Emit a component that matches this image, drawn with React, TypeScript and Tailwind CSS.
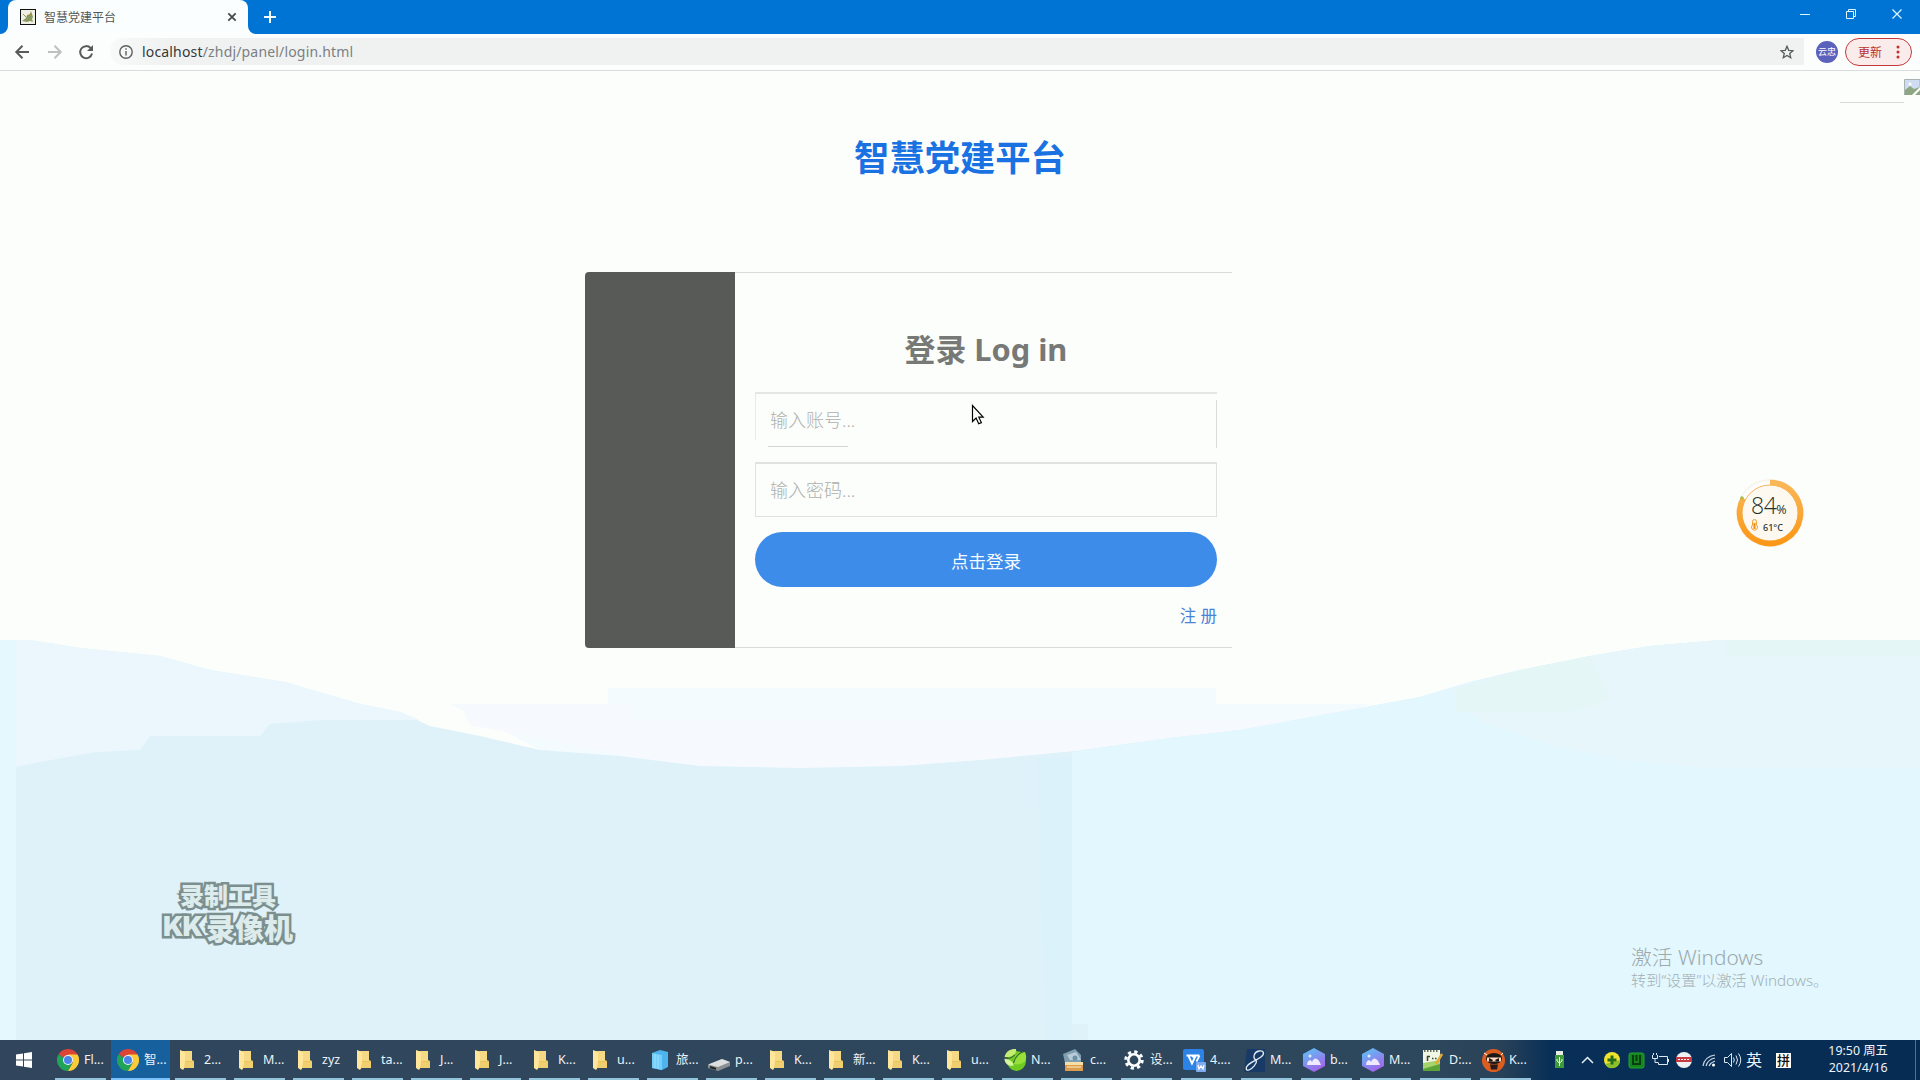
import React from "react";

function Tab() {
  return (
    <header className="flex h-[34px] items-start bg-[#0074d4]">
      <div className="relative ml-2 flex h-[34px] w-[240px] items-center rounded-t-lg bg-[#fbfefe] pl-3">
        <svg className="absolute -left-2 bottom-0" width="8" height="8"><path d="M8 0v8H0a8 8 0 0 0 8-8z" fill="#fbfefe" /></svg>
        <svg className="absolute -right-2 bottom-0" width="8" height="8"><path d="M0 0v8h8a8 8 0 0 1-8-8z" fill="#fbfefe" /></svg>
        <svg width="16" height="16" viewBox="0 0 16 16">
          <rect x=".5" y=".5" width="15" height="15" fill="#eef0e4" stroke="#111" />
          <path d="M2 12l4-3 1-3 3-1 1-3 1 3 1 3-1 2 1 3-3-1-3 1z" fill="#8b9a63" />
          <path d="M3 5l3 3M11 4l-1 3" stroke="#a58b45" fill="none" />
        </svg>
        <span className="ml-2 w-[181px] pt-px text-[12px] leading-4 text-[#50585a]">智慧党建平台</span>
        <svg width="14" height="14" viewBox="0 0 14 14"><path d="M3.3 3.3l7.4 7.4M10.7 3.3L3.3 10.7" stroke="#444a4a" strokeWidth="1.8" /></svg>
      </div>
      <svg className="ml-[15px] mt-[10px]" width="14" height="14"><path d="M7 1v12M1 7h12" stroke="#f4fdff" strokeWidth="2" /></svg>
      <svg className="ml-auto mr-[18px] mt-[7px]" width="108" height="14" fill="none" stroke="#dcf7ff">
        <path d="M6 7.5h10" />
        <path d="M52.5 4.5h7v7h-7zM54.500 4.500v-2h7v7h-2" />
        <path d="M98.500 2.500l9 9M107.500 2.500l-9 9" strokeWidth="1.2" />
      </svg>
    </header>
  );
}

function Toolbar() {
  return (
    <div className="flex h-[37px] items-center border-b border-[#d9dcdc] bg-[#fbfefd] pb-px">
      <svg className="ml-[14px]" width="84" height="18" viewBox="0 0 84 18" fill="none" strokeWidth="2">
        <path d="M15 9H2.500M8.500 2.800L2.300 9l6.200 6.200" stroke="#575b5b" />
        <path d="M34 9h12.500M40.500 2.800L46.700 9l-6.200 6.200" stroke="#bcc0c0" />
        <path d="M76.700 5.200A6 6 0 1 0 78 10.500" stroke="#575b5b" />
        <path d="M79 2v6h-6z" fill="#575b5b" />
      </svg>
      <div className="ml-[12px] flex h-[27px] w-[1694px] items-center rounded-l-[13px] bg-[linear-gradient(90deg,#f8fafa_0,#f0f2f2_60px)] pl-[9px]">
        <svg width="14" height="14" viewBox="0 0 14 14" fill="none" stroke="#5c6060" strokeWidth="1.400"><circle cx="7" cy="7" r="6.200" /><path d="M7 6v4.500M7 3.200v1.600" /></svg>
        <span className="ml-[9px] text-[14px] leading-5 text-[#7a8082] [letter-spacing:0.17px]"><span className="text-[#34393a]">localhost</span>/zhdj/panel/login.html</span>
        <svg className="ml-auto mr-[10px]" width="14" height="14" viewBox="0 0 14 14"><path d="M7 1.300l1.700 4 4.300.4-3.300 2.800 1 4.200L7 10.500l-3.700 2.200 1-4.200L1 5.700l4.300-.4z" fill="none" stroke="#555b5b" strokeWidth="1.300" /></svg>
      </div>
      <div className="ml-[12px] flex h-[22px] w-[22px] items-center justify-center whitespace-nowrap rounded-full bg-[#5b62bb] text-[9px] text-white">云忠</div>
      <div className="ml-[7px] flex h-7 w-[67px] items-center rounded-full border border-[#c4383a] bg-[#fbecec] pl-3 text-[12px] text-[#b9312f]">
        <span className="pt-[2px]">更新</span>
        <svg className="ml-[14px]" width="4" height="14" fill="#c0302f"><circle cx="2" cy="2" r="1.500" /><circle cx="2" cy="7" r="1.500" /><circle cx="2" cy="12" r="1.500" /></svg>
      </div>
    </div>
  );
}

function Waves() {
  return (
    <svg className="absolute inset-0" width="1920" height="969" viewBox="0 71 1920 969">
      <rect y="71" width="1920" height="969" fill="#fcfefb" />
      <path d="M608 688H1216V704H1370L1200 760H560L450 704H608z" fill="#f4fbfe" />
      <path d="M460 704H630V720H1330L1150 770H700L470 725z" fill="#f6faff" />
      <path d="M0 640H30L80 648L160 656L210 670L285 682L360 704L400 712L430 726L480 736L540 750L620 756L700 766L800 768L900 766L980 760L1075 751L1170 738L1240 730L1300 719L1360 708L1420 697L1470 682L1520 670L1590 656L1650 646L1720 640H1920V1040H0z" fill="#dff2fa" />
      <path d="M1072 752L1170 738L1240 730L1300 719L1360 708L1420 697L1470 682L1520 670L1590 656L1650 646L1720 640H1920V1040H1088V1024H1072z" fill="#e3f7fe" />
      <path d="M1450 690L1520 670L1590 656L1650 646L1720 640H1920V768H1700L1620 760L1550 745L1480 722z" fill="#e6f6fb" />
      <path d="M1455 688L1520 670L1590 656L1610 700L1570 712H1455zM1725 640H1920V656H1725z" fill="#e5f6f7" />
      <path d="M0 640H30L80 648L160 656L210 670L285 682L360 704L400 712L420 720H320L270 724L260 736H150L140 750L96 752L40 762L0 770z" fill="#ebf7fd" />
      <path d="M0 640H16V1040H0z" fill="#e4f8fd" />
      <path d="M1037 758H1072V1040H1045z" fill="#dcf2fa" />
    </svg>
  );
}

function Gauge() {
  return (
    <div className="absolute left-[1735px] top-[407px] h-[70px] w-[70px]">
      <svg className="absolute inset-0" width="70" height="70" viewBox="0 0 70 70">
        <defs><linearGradient id="ring" x1="0" y1="0" x2="0" y2="1"><stop offset="0" stopColor="#f9b757" /><stop offset="1" stopColor="#fb9716" /></linearGradient></defs>
        <circle cx="35" cy="35" r="34" fill="#f8f4f0" />
        <circle cx="35" cy="35" r="32" fill="#fff" />
        <circle cx="35" cy="35" r="28" fill="#fdf9f1" stroke="#f7b45c" />
        <path d="M35 4.500A30.500 30.500 0 1 1 8.300 20.300" fill="none" stroke="url(#ring)" strokeWidth="5.500" />
        <circle cx="7" cy="20" r="1.800" fill="#a9bb4c" />
        <path d="M17.500 43.500a2 2 0 0 1 4 0v3.500a3 3 0 1 1-4 0z" fill="#fff1d6" stroke="#eda338" />
        <path d="M19.500 45v6" stroke="#e98e17" strokeWidth="2" />
      </svg>
      <div className="relative flex h-full flex-col pl-[16px] pt-[13px] text-[#26322d]">
        <div className="flex items-baseline font-['Open_Sans','Noto_Sans',sans-serif] leading-[28px]"><span className="text-[23px] font-light tracking-[-0.5px]">84</span><span className="text-[12.500px]">%</span></div>
        <div className="ml-[12px] mt-[-3px] text-[9px] font-medium leading-[14px]">61°C</div>
      </div>
    </div>
  );
}

function LoginCard() {
  return (
    <section className="ml-[585px] mt-[91px] flex h-[376px] w-[647px]">
      <div className="w-[150px] rounded-l bg-[#585a57]" />
      <div className="flex flex-1 flex-col border-y border-[#d9dcda] pl-[20px] pr-[15px]">
        <h2 className="mt-[55px] text-center text-[30.800px] font-bold leading-[42px] text-[#777976]">登录 Log in</h2>
        <div className="relative mt-[22px] flex h-[55px] w-[462px] items-center border-t-2 border-[#e5e7e5] pl-[15px]">
          <span className="absolute left-0 top-0 h-[46px] w-px bg-[#e9ebe9]" />
          <span className="absolute right-0 top-[6px] h-[48px] w-px bg-[#d9dbda]" />
          <span className="absolute bottom-0 left-[13px] h-px w-[80px] bg-[#d4d6d5]" />
          <span className="text-[18px] font-light text-[#aeb0ae]">输入账号...</span>
        </div>
        <div className="mt-[15px] flex h-[55px] w-[462px] items-center border border-t-2 border-[#e0e2e0] pl-[14px]">
          <span className="text-[18px] font-light text-[#aeb0ae]">输入密码...</span>
        </div>
        <button className="mt-[15px] h-[55px] w-[462px] rounded-[28px] bg-[#3e8ce9] pt-1 text-[17.500px] text-[#f4fbff]">点击登录</button>
        <a className="mt-[17px] self-end text-[16.500px] leading-6 text-[#4a83d8]">注 册</a>
      </div>
    </section>
  );
}

function Watermark() {
  return (
    <div className="absolute left-[158px] top-[810px] flex w-[140px] flex-col items-center whitespace-nowrap font-['Noto_Sans_CJK_SC',sans-serif] font-black text-[#dcebec] [-webkit-text-stroke:5px_#7c8f8f] [paint-order:stroke_fill]">
      <div className="text-[24px] leading-[28px]">录制工具</div>
      <div className="mt-[3px] flex h-[30px] items-center leading-[30px]"><span className="font-['Inter',sans-serif] text-[27px] tracking-[-1px]">KK</span><span className="ml-1 text-[29px]">录像机</span></div>
    </div>
  );
}

function Page() {
  return (
    <main className="relative h-[969px] overflow-hidden">
      <Waves />
      <div className="relative">
        <h1 className="pt-[63px] text-center text-[35.300px] font-bold leading-[47px] text-[#1a72e2]">智慧党建平台</h1>
        <LoginCard />
      </div>
      <span className="absolute left-[1840px] top-[31px] h-px w-16 bg-[#d8dada]" />
      <svg className="absolute left-[1904px] top-[8px]" width="16" height="16"><path d="M.5.500H16V16H.5z" fill="#cfdcf2" stroke="#a9b1b1" /><path d="M1 16V11l5-4 4 3 6-2v8z" fill="#8da783" /><path d="M8 16L16 8v3l-5 5z" fill="#fff" /><circle cx="6" cy="5" r="1.600" fill="#fff" /></svg>
      <svg className="absolute left-[971px] top-[333px]" width="14" height="21" viewBox="0 0 14 21"><path d="M1.500 1.500v16l3.600-3.400 2.600 5.700 2.700-1.200-2.600-5.400h4.400z" fill="#fff" stroke="#000" strokeWidth="1.200" /></svg>
      <Gauge />
      <Watermark />
      <div className="absolute left-[1631px] top-[872px] whitespace-nowrap font-light text-[#a2b1b6]">
        <div className="text-[20.800px] leading-[28px] text-[#9caaae]">激活 Windows</div>
        <div className="text-[15.200px] leading-[19px]">转到“设置”以激活 Windows。</div>
      </div>
    </main>
  );
}

const icons: Record<string, React.ReactNode> = {
  chrome: (
    <svg width="22" height="22" viewBox="0 0 22 22">
      <path d="M11 11L1.470 5.500A11 11 0 0 1 20.530 5.500z" fill="#dc4437" /><path d="M1.470 5.500A11 11 0 0 0 11 22l4.300-8.500L11 11z" fill="#22a35a" /><path d="M20.530 5.500A11 11 0 0 1 11 22l4.800-8.500L11 5.500z" fill="#fbcb38" />
      <circle cx="11" cy="11" r="5" fill="#edf4f8" /><circle cx="11" cy="11" r="4" fill="#4a85ea" />
    </svg>
  ),
  folder: (
    <svg className="-ml-[3px]" width="14" height="20" viewBox="0 0 14 20"><path d="M2 1h10v9l2 1v7H2z" fill="#ecc558" /><path d="M5 1h7v10H5z" fill="#f5d985" /><path d="M0 0l5 2v15l-2 3-3-2z" fill="#ffe69a" /><path d="M5 12h9v6H4z" fill="#efcf70" /></svg>
  ),
  box: (
    <svg width="16" height="20" viewBox="0 0 16 20"><path d="M0 3l8-3 8 2v15l-6 3-10-2z" fill="#4db4ef" /><path d="M0 3l10 2v15L0 18z" fill="#74cdfb" /><path d="M3 4v14M6 5v14" stroke="#9de1ff" /></svg>
  ),
  disk: (
    <svg width="22" height="12" viewBox="0 0 22 12"><path d="M0 6l14-6 8 3v4l-12 5L0 9z" fill="#8b9193" /><path d="M0 5.500L14 0l8 3-12 5z" fill="#dcdfde" /><path d="M2 8l6 2" stroke="#222" strokeWidth="2" /></svg>
  ),
  leaf: (
    <svg width="24" height="24" viewBox="0 0 24 24"><ellipse cx="13.500" cy="13" rx="9.500" ry="10" fill="#6fcb24" /><path d="M1.500 9C3 2 9 .5 13 1c1 5-4 9-11.500 8z" fill="#c4ee73" /><path d="M22 4c4 10-3 13-11 12-1-7 4-11 11-12z" fill="#95e138" /><path d="M1.500 10.500c5 1 9 3 9 7-4 1-9-1-9-7z" fill="#d5f59c" /><path d="M20 3.500C15 6 12 9 10.500 15M1.500 9.800c4 1 8-.5 10-3" stroke="#3f6a34" strokeWidth="1.200" fill="none" /></svg>
  ),
  tray: (
    <svg width="22" height="24" viewBox="0 0 22 24"><path d="M0 6L12 1l6 6v8H2z" fill="#7e9eb2" /><path d="M4 7l9-3 5 8H7z" fill="#b9cbd4" /><circle cx="12" cy="10" r="2.500" fill="#6a90a7" /><path d="M2 14h18v3H2z" fill="#f7dda6" /><path d="M2 17h18v6H2z" fill="#db9c4d" /><path d="M4 19h14" stroke="#fff0c8" /></svg>
  ),
  gear: (
    <svg width="20" height="20" viewBox="0 0 20 20" fill="none" stroke="#fff"><circle cx="10" cy="10" r="5.700" strokeWidth="2.600" /><circle cx="10" cy="10" r="8.200" strokeWidth="3" strokeDasharray="3.220 3.220" /></svg>
  ),
  wps: (
    <svg width="23" height="23" viewBox="0 0 23 23"><rect width="21" height="21" rx="2" fill="#2c82e5" /><path d="M3.500 6.500h13M5.500 7l3.500 7.500 3.500-7.500M9 6.500l3 3M16.500 6.500l-3 6" fill="none" stroke="#fff" strokeWidth="1.800" /><rect x="13" y="13" width="10" height="10" rx="1" fill="#7eaaf0" /><path d="M15 16l1 4 2-3 2 3 1-4" fill="none" stroke="#fff" strokeWidth="1.300" /></svg>
  ),
  swirl: (
    <svg width="21" height="23" viewBox="0 0 21 23"><path d="M3 0h18v23H0z" fill="#173b66" /><path d="M12.500 11.500C8 9 10 3 15 2s6 3 2 6-10 5-13 8-2 6 1 5 8-6 7.500-9.500" fill="none" stroke="#e4edf5" strokeWidth="1.300" /></svg>
  ),
  hex: (
    <svg width="22" height="24" viewBox="0 0 22 24"><defs><linearGradient id="hexfill" x1="0" y1="0" x2=".5" y2="1"><stop stopColor="#56c9f5" /><stop offset="1" stopColor="#a266ea" /></linearGradient></defs><path d="M11 0l11 6v12l-11 6L0 18V6z" fill="url(#hexfill)" /><path d="M4 17c0-5 4-6 5-3 2-5 6-5 9 3z" fill="#eee9ff" /><circle cx="7" cy="8" r="1.500" fill="#eee9ff" /></svg>
  ),
  notepad: (
    <svg width="20" height="23" viewBox="0 0 20 23"><path d="M0 1h17v21H0z" fill="#f2f6e4" /><path d="M0 14h17v8H0z" fill="#5ba43a" /><path d="M0 14l17-3v4L0 20z" fill="#a5d36c" /><path d="M1 2h15" stroke="#35462c" strokeWidth="1.500" strokeDasharray="1.500 1.500" /><path d="M4.500 12V7.500h2.500M9 9.500h1.500M12 9.500h1.500" fill="none" stroke="#35462c" strokeWidth="1.500" /><path d="M19 5l-6 10" stroke="#e4aa38" strokeWidth="2.500" /></svg>
  ),
  ninja: (
    <svg width="23" height="23" viewBox="0 0 23 23"><circle cx="11.500" cy="11.500" r="11.500" fill="#dc5d20" /><ellipse cx="12" cy="9.500" rx="8" ry="5.500" fill="#1d1717" /><path d="M8 15.500h8l-1 5H9z" fill="#281b18" /><path d="M5 8.500h14v4H5z" fill="#ffdcc2" /><path d="M7 9l4 2-1 1.500H7zM17 9l-4 2 1 1.500h3z" fill="#1d1717" /><path d="M5 6l-3-2M19 6l2-2" stroke="#fff" /></svg>
  ),
};

const tasks: [string, string, number][] = [
  ["folder", "2...", 59], ["folder", "M...", 59], ["folder", "zyz", 59], ["folder", "ta...", 59], ["folder", "J...", 59],
  ["folder", "J...", 59], ["folder", "K...", 59], ["folder", "u...", 59], ["box", "旅...", 59], ["disk", "p...", 59],
  ["folder", "K...", 59], ["folder", "新...", 59], ["folder", "K...", 59], ["folder", "u...", 60], ["leaf", "N...", 59],
  ["tray", "c...", 60], ["gear", "设...", 60], ["wps", "4....", 60], ["swirl", "M...", 60], ["hex", "b...", 59],
  ["hex", "M...", 60], ["notepad", "D:...", 60], ["ninja", "K...", 60],
];

function Task({ icon, label, width }: { icon: string; label: string; width: number }) {
  return (
    <div className="h-full shrink-0" style={{ width }}>
      <div className="flex h-full w-[51px] items-center border-b-2 border-[#93c4dc] pt-[2px]">
        <span className={"flex w-[26px] shrink-0 justify-center " + (icon === "disk" ? "pt-[10px]" : "")}>{icons[icon]}</span>
        <span className="ml-[3px] whitespace-nowrap text-[12.500px] leading-4">{label}</span>
      </div>
    </div>
  );
}

function Tray() {
  return (
    <svg className="shrink-0" width="194" height="24" viewBox="1550 0 194 24" fill="none">
      <path d="M1556 3h7v5h-7z" fill="#e6ede4" /><path d="M1555 7h9v13h-9z" fill="#3f9b38" /><path d="M1559.500 9v9M1557 11v2l2.500 2M1562 11v2l-2.500 2" stroke="#eaffdf" />
      <path d="M1582 15l5.500-5.500L1593 15" stroke="#e5eef7" strokeWidth="1.500" />
      <circle cx="1612" cy="12" r="8" fill="#f1e22e" /><path d="M1605 16a8 8 0 0 0 15-4z" fill="#8bbf2c" /><path d="M1612 7.500v9M1607.500 12h9" stroke="#276e1b" strokeWidth="3" />
      <rect x="1629" y="5" width="15" height="15" rx="2" fill="#14861c" stroke="#23a52b" /><path d="M1633 7v9h7V7M1636.500 7v6" stroke="#073d13" strokeWidth="2" />
      <path d="M1659 8.500h8.500v8h-9v-2M1668.500 11v3M1652.500 7v3.500h5V7M1655 10.500v4h3" stroke="#dce7f0" /><path d="M1653.500 7V5M1656.500 7V5" stroke="#dce7f0" />
      <circle cx="1684" cy="12" r="8" fill="#eef1f3" /><path d="M1676 9h16v5h-16z" fill="#c83a40" /><path d="M1678 11.500h12" stroke="#fff" strokeDasharray="2 1" />
      <path d="M1703 18c1-6 5-10 12-11M1706 18c1-4 4-7 9-8M1709 18c1-2 3-4 6-5" stroke="#cbd8e3" strokeWidth="1.200" /><circle cx="1713.500" cy="17" r="1.500" fill="#fff" />
      <path d="M1724.500 9.500h3l4-4v13l-4-4h-3zM1733.500 9.500q1.500 2.500 0 5M1736 7.500q3 4.500 0 9M1738.500 5.500q4.500 6.500 0 13" stroke="#dce7f0" />
    </svg>
  );
}

function Taskbar() {
  return (
    <footer className="flex h-10 items-center overflow-hidden bg-[linear-gradient(90deg,#31465c_0,#2d475c_1430px,#2a4258_1500px,#082f57_1550px,#072c53_1920px)] text-[#edf3f8]">
      <svg className="ml-4 shrink-0" width="16" height="16" fill="#fff"><path d="M0 2.500L7 1.500V7.500H0zM8 1.300L16 0V7.500H8zM0 8.500H7V14.500L0 13.500zM8 8.500H16V16L8 14.800z" /></svg>
      <div className="ml-[23px] flex h-full">
        <Task icon="chrome" label="Fl..." width={56} />
        <div className="mr-[5px] flex h-full w-[59px] items-center border-b-2 border-[#7cc3fb] bg-[#15609d] pl-[4px] pt-[2px]">
          <span className="flex w-[26px] justify-center">{icons.chrome}</span>
          <span className="ml-[3px] whitespace-nowrap text-[12.500px] leading-4">智...</span>
        </div>
        {tasks.map(([icon, label, width], i) => <Task key={i} icon={icon} label={label} width={width} />)}
      </div>
      <div className="ml-[10px] flex shrink-0 items-center">
        <Tray />
        <span className="ml-[2px] text-[16px] leading-5">英</span>
        <span className="ml-[14px] flex h-[15px] w-[15px] items-center justify-center bg-white text-[13px] font-medium leading-[15px] text-[#111]">拼</span>
      </div>
      <div className="ml-auto mr-[27px] flex shrink-0 flex-col items-center whitespace-nowrap pb-[2px] text-[12.400px] leading-[17px]"><span>19:50 周五</span><span>2021/4/16</span></div>
      <span className="mr-1 h-full w-px bg-[#536f8c]" />
    </footer>
  );
}

export default function App() {
  return (
    <div className="h-[1080px] w-[1920px] overflow-hidden font-['Noto_Sans','Noto_Sans_CJK_SC',sans-serif]">
      <Tab />
      <Toolbar />
      <Page />
      <Taskbar />
    </div>
  );
}
